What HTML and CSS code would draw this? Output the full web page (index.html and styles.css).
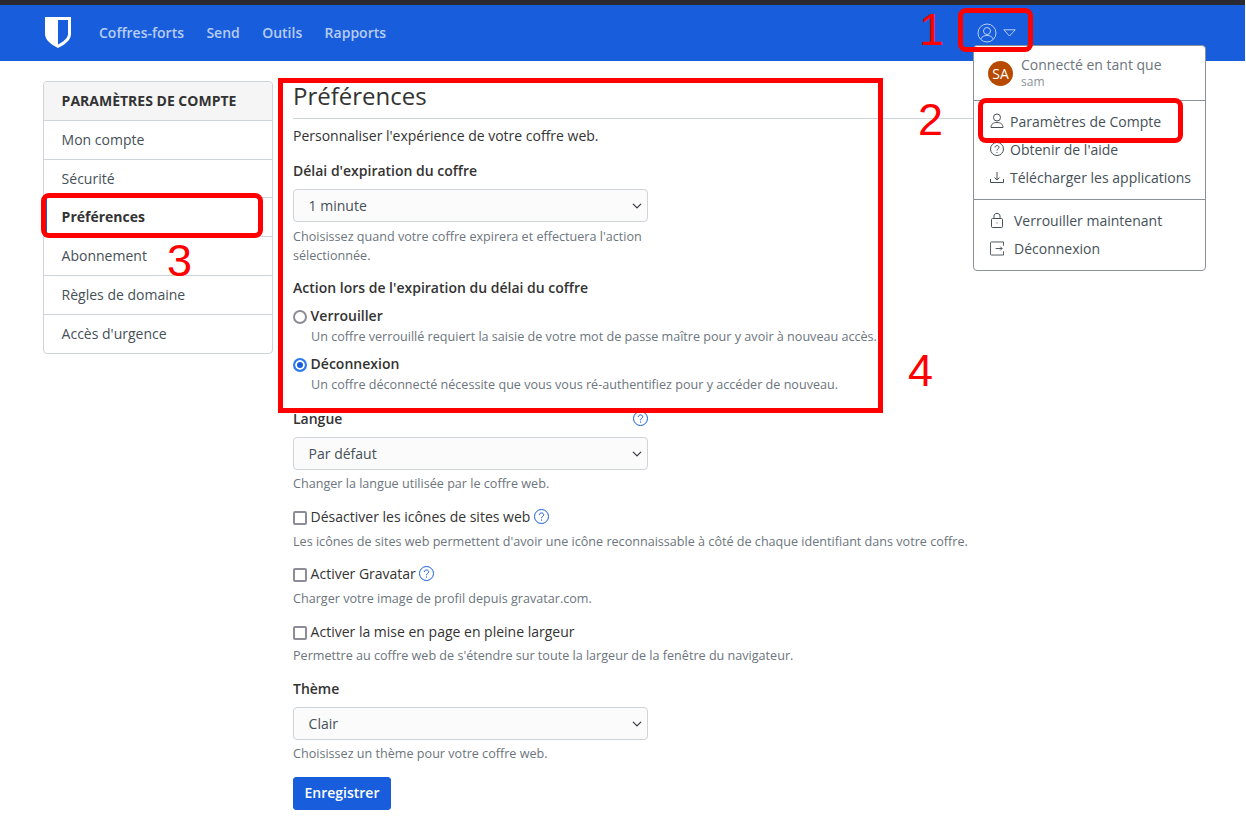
FILE: index.html
```html
<!DOCTYPE html>
<html lang="fr">
<head>
    <meta charset="UTF-8">
    <title>Préférences</title>
    <link rel="stylesheet" href="styles.css">
</head>
<body>
    <div class="top-strip"></div>
    <nav class="navbar">
        <svg class="logo" width="26" height="31" viewBox="0 0 26 31">
            <path fill="#fff" d="M0 0H26V17C26 23.500 19 28 13 31C7 28 0 23.500 0 17Z"/>
            <path fill="#175ddc" d="M13 3H23V17C23 21 18 25 13 27.500Z"/>
        </svg>
        <a class="nav-link nav-first" href="#">Coffres-forts</a>
        <a class="nav-link" href="#">Send</a>
        <a class="nav-link" href="#">Outils</a>
        <a class="nav-link" href="#">Rapports</a>
    </nav>

    <div class="user-toggle">
        <svg width="20" height="20" viewBox="0 0 20 20" fill="none" stroke="#b9cff5" stroke-width="1">
            <circle cx="10" cy="10" r="9"/>
            <circle cx="10" cy="8" r="3.500"/>
            <path d="M3.800 16C5 13.500 7 12.500 10 12.500S15 13.500 16.200 16"/>
        </svg>
        <svg width="13" height="8" viewBox="0 0 13 8" fill="none" stroke="#b9cff5" stroke-width="1">
            <path d="M.8.800H12.200L6.500 7Z"/>
        </svg>
    </div>

    <div class="user-menu">
        <div class="menu-head">
            <span class="avatar">SA</span>
            <div>
                <div class="menu-who">Connecté en tant que</div>
                <div class="menu-name">sam</div>
            </div>
        </div>
        <div class="menu-group">
            <a class="menu-item" href="#">
                <svg width="14" height="16" viewBox="0 0 14 16" fill="none" stroke="#465057">
                    <circle cx="7" cy="4.500" r="3.500"/>
                    <path d="M1 14.500C1 11 3.500 9.500 7 9.500S13 11 13 14.500Z"/>
                </svg>
                Paramètres de Compte
            </a>
            <a class="menu-item" href="#">
                <svg width="14" height="14" viewBox="0 0 14 14" fill="none" stroke="#465057">
                    <circle cx="7" cy="7" r="6.500"/>
                    <path d="M5 5.500C5 3 9 3 9 5.300C9 6.800 7 6.800 7 8.500"/>
                    <path d="M7 10V11"/>
                </svg>
                Obtenir de l'aide
            </a>
            <a class="menu-item" href="#">
                <svg width="14" height="14" viewBox="0 0 14 14" fill="none" stroke="#465057">
                    <path d="M.5 9V12.500H13.500V9"/>
                    <path d="M7 2V10M4.500 7.500L7 10L9.500 7.500"/>
                </svg>
                Télécharger les applications
            </a>
        </div>
        <div class="menu-group menu-last">
            <a class="menu-item" href="#">
                <svg width="14" height="16" viewBox="0 0 14 16" fill="none" stroke="#465057">
                    <rect x="1.500" y="6.500" width="11" height="9" rx="1"/>
                    <path d="M4 6.500V4C4 .5 10 .5 10 4V6.500M7 10.500V11.500"/>
                </svg>
                Verrouiller maintenant
            </a>
            <a class="menu-item" href="#">
                <svg width="14" height="15" viewBox="0 0 15 15" fill="none" stroke="#465057">
                    <path d="M14.500 4.500V.5H1.500A1 1 0 0 0 .5 1.500V13.500A1 1 0 0 0 1.500 14.500H14.500V10.500"/>
                    <path d="M6 7.500H13M11 5.500L13 7.500L11 9.500"/>
                </svg>
                Déconnexion
            </a>
        </div>
    </div>

    <div class="page">
        <aside class="side-card">
            <div class="side-head">Paramètres de compte</div>
            <a class="side-item" href="#">Mon compte</a>
            <a class="side-item side-short" href="#">Sécurité</a>
            <a class="side-item active" href="#">Préférences</a>
            <a class="side-item" href="#">Abonnement</a>
            <a class="side-item" href="#">Règles de domaine</a>
            <a class="side-item" href="#">Accès d'urgence</a>
        </aside>

        <main class="content">
            <h1 class="page-title">Préférences</h1>
            <p class="intro">Personnaliser l'expérience de votre coffre web.</p>

            <div class="field field-timeout">
                <label class="field-label" for="timeout">Délai d'expiration du coffre</label>
                <select class="select" id="timeout"><option>1 minute</option></select>
                <small class="help help-narrow">Choisissez quand votre coffre expirera et effectuera l'action sélectionnée.</small>
            </div>

            <div class="field field-action">
                <div class="field-label">Action lors de l'expiration du délai du coffre</div>
                <label class="radio-row">
                    <input type="radio" name="action">
                    <span class="radio-text">Verrouiller</span>
                </label>
                <small class="help help-indent">Un coffre verrouillé requiert la saisie de votre mot de passe maître pour y avoir à nouveau accès.</small>
                <label class="radio-row radio-second">
                    <input type="radio" name="action" checked>
                    <span class="radio-text">Déconnexion</span>
                </label>
                <small class="help help-indent">Un coffre déconnecté nécessite que vous vous ré-authentifiez pour y accéder de nouveau.</small>
            </div>

            <div class="field field-lang">
                <div class="label-row">
                    <label class="field-label" for="lang">Langue</label>
                    <svg class="info" width="15" height="15" viewBox="0 0 15 15" fill="none" stroke="#175ddc">
                        <circle cx="7.500" cy="7.500" r="7"/>
                        <path d="M5.300 6C5.300 3.300 9.700 3.300 9.700 5.800C9.700 7.400 7.500 7.400 7.500 9.300M7.500 10.500V11.700"/>
                    </svg>
                </div>
                <select class="select" id="lang"><option>Par défaut</option></select>
                <small class="help">Changer la langue utilisée par le coffre web.</small>
            </div>

            <div class="check-block">
                <label class="check-row">
                    <input type="checkbox">
                    <span>Désactiver les icônes de sites web</span>
                    <svg class="info" width="15" height="15" viewBox="0 0 15 15" fill="none" stroke="#175ddc">
                        <circle cx="7.500" cy="7.500" r="7"/>
                        <path d="M5.300 6C5.300 3.300 9.700 3.300 9.700 5.800C9.700 7.400 7.500 7.400 7.500 9.300M7.500 10.500V11.700"/>
                    </svg>
                </label>
                <small class="help">Les icônes de sites web permettent d'avoir une icône reconnaissable à côté de chaque identifiant dans votre coffre.</small>
            </div>

            <div class="check-block check-second">
                <label class="check-row">
                    <input type="checkbox">
                    <span>Activer Gravatar</span>
                    <svg class="info" width="15" height="15" viewBox="0 0 15 15" fill="none" stroke="#175ddc">
                        <circle cx="7.500" cy="7.500" r="7"/>
                        <path d="M5.300 6C5.300 3.300 9.700 3.300 9.700 5.800C9.700 7.400 7.500 7.400 7.500 9.300M7.500 10.500V11.700"/>
                    </svg>
                </label>
                <small class="help">Charger votre image de profil depuis gravatar.com.</small>
            </div>

            <div class="check-block check-third">
                <label class="check-row">
                    <input type="checkbox">
                    <span>Activer la mise en page en pleine largeur</span>
                </label>
                <small class="help">Permettre au coffre web de s'étendre sur toute la largeur de la fenêtre du navigateur.</small>
            </div>

            <div class="field field-theme">
                <label class="field-label" for="theme">Thème</label>
                <select class="select" id="theme"><option>Clair</option></select>
                <small class="help">Choisissez un thème pour votre coffre web.</small>
            </div>

            <button class="save-btn">Enregistrer</button>
        </main>
    </div>

    <!-- annotations drawn over the screenshot -->
    <div class="mark mark-1"></div>
    <div class="mark mark-2"></div>
    <div class="mark mark-3"></div>
    <div class="mark mark-4"></div>
    <span class="num num-1">1</span>
    <span class="num num-2">2</span>
    <span class="num num-3">3</span>
    <span class="num num-4">4</span>
</body>
</html>
```

FILE: styles.css
```css
html, body {
    margin: 0;
    background: #fff;
}
body {
    position: relative;
    height: 824px;
    overflow: hidden;
    font: 14px/21px "Open Sans", sans-serif;
    color: #333;
}
a {
    text-decoration: none;
    color: inherit;
}

.top-strip {
    height: 5px;
    margin-right: 1px;
    background: #2b2a33;
}
.navbar {
    display: flex;
    align-items: center;
    height: 56px;
    margin-right: 1px;
    padding-left: 45px;
    background: #175ddc;
}
.logo {
    margin-top: -1px;
}
.nav-link {
    margin: -2px 0 0 22.400px;
    font-weight: 600;
    color: rgba(255, 255, 255, .7);
}
.nav-first {
    margin-left: 28px;
}

.user-toggle {
    position: absolute;
    top: 23px;
    left: 977px;
    display: flex;
    align-items: center;
    gap: 6px;
}
.user-menu {
    position: absolute;
    top: 45px;
    left: 973px;
    z-index: 2;
    box-sizing: border-box;
    width: 233px;
    height: 226px;
    background: #fff;
    border: 1px solid #8b9199;
    border-radius: 4px;
    color: #465057;
}
.menu-head {
    display: flex;
    align-items: center;
    gap: 8px;
    height: 52px;
    padding: 0 0 2px 14px;
    border-bottom: 1px solid #8b9199;
}
.avatar {
    display: flex;
    align-items: center;
    justify-content: center;
    width: 25px;
    height: 25px;
    margin-top: 2px;
    border-radius: 50%;
    background: #b84a00;
    color: #fff;
    font-size: 14px;
}
.menu-who {
    color: #6d757e;
    line-height: 19px;
}
.menu-name {
    color: #8b9199;
    font-size: 12px;
    line-height: 16px;
}
.menu-group {
    padding: 6px 0 8px;
    border-bottom: 1px solid #8b9199;
}
.menu-last {
    border-bottom: 0;
}
.menu-item {
    display: flex;
    align-items: center;
    gap: 6px;
    height: 28px;
    padding-left: 16px;
}
.menu-last .menu-item {
    gap: 10px;
}

.page {
    display: flex;
    align-items: flex-start;
    gap: 20px;
    padding: 20px 0 0 43px;
}
.side-card {
    flex: none;
    width: 230px;
    box-sizing: border-box;
    border: 1px solid #ced4da;
    border-radius: 4px;
    overflow: hidden;
}
.side-head {
    box-sizing: border-box;
    height: 39px;
    padding: 8px 17.600px;
    background: #f5f5f5;
    border-bottom: 1px solid #ced4da;
    font-weight: 700;
    text-transform: uppercase;
}
.side-item {
    display: block;
    box-sizing: border-box;
    height: 39px;
    padding: 8px 17.600px;
    border-bottom: 1px solid #ced4da;
    color: #465057;
}
.side-short {
    height: 38px;
}
.side-item:last-child {
    border-bottom: 0;
    height: 38px;
}
.side-item.active {
    padding-left: 14.600px;
    border-left: 3px solid #175ddc;
    font-weight: 700;
    color: #333;
}

.content {
    width: 910px;
}
.page-title {
    margin: 0;
    padding-bottom: 8px;
    border-bottom: 1px solid #ced4da;
    font-size: 24px;
    font-weight: 400;
    line-height: 29px;
    color: #333;
}
.intro {
    margin: 6px 0 0;
}
.field {
    width: 355px;
}
.field-label {
    display: block;
    margin-bottom: 8px;
    font-weight: 600;
}
.field-timeout {
    margin-top: 14px;
}
.field-action {
    width: 600px;
    margin-top: 12px;
}
.field-action .field-label {
    margin-bottom: 7px;
}
.field-lang {
    margin-top: 14px;
}
.field-theme {
    margin-top: 13px;
}
.label-row {
    display: flex;
    align-items: flex-start;
    justify-content: space-between;
    height: 29px;
}
.label-row .info {
    margin-top: 3px;
}
.select {
    display: block;
    box-sizing: border-box;
    width: 355px;
    height: 33px;
    padding: 0 28px 0 14.600px;
    appearance: none;
    background: #fbfbfb url("data:image/svg+xml,%3Csvg xmlns='http://www.w3.org/2000/svg' viewBox='0 0 16 16'%3E%3Cpath fill='none' stroke='%23343a40' stroke-width='2' stroke-linecap='round' stroke-linejoin='round' d='M2 5l6 6 6-6'/%3E%3C/svg%3E") no-repeat right 5px center / 10px 10px;
    border: 1px solid #ced4da;
    border-radius: 4px;
    font: 14px "Open Sans", sans-serif;
    color: #465057;
}
.help {
    display: block;
    margin-top: 4px;
    font-size: 12.600px;
    line-height: 19px;
    color: #6c757d;
}
.help-narrow {
    width: 355px;
    margin-top: 5px;
}
.help-indent {
    margin: 1px 0 0 18px;
    white-space: nowrap;
}

.radio-row, .check-row {
    display: flex;
    align-items: center;
    gap: 3.600px;
    height: 21px;
}
.radio-second {
    margin-top: 7px;
}
.radio-text {
    font-weight: 600;
}
input[type="radio"], input[type="checkbox"] {
    appearance: none;
    box-sizing: border-box;
    flex: none;
    width: 14px;
    height: 14px;
    margin: 3px 0 0;
    background: #fff;
    border: 2px solid #8d8d99;
}
input[type="radio"] {
    border-radius: 50%;
}
input[type="radio"]:checked {
    border-color: #2f7bf0;
    box-shadow: inset 0 0 0 2px #fff;
    background: #175ddc;
}
input[type="checkbox"] {
    border-radius: 2px;
}
.check-block {
    margin-top: 13px;
}
.check-block .help {
    margin-top: 5px;
}
.check-second {
    margin-top: 12px;
}
.check-third .help {
    margin-top: 4px;
}
.save-btn {
    display: block;
    width: 98px;
    height: 33px;
    margin-top: 14px;
    padding: 0 0 2px;
    background: #175ddc;
    border: 1px solid #175ddc;
    border-radius: 3px;
    font: 600 14px "Open Sans", sans-serif;
    color: #fff;
}

/* red annotation boxes */
.mark {
    position: absolute;
    z-index: 3;
    box-sizing: border-box;
    border: 5px solid #f00;
    border-radius: 8px;
}
.mark-1 { left: 958px; top: 8px; width: 75px; height: 44px; }
.mark-2 { left: 978px; top: 98px; width: 205px; height: 45px; }
.mark-3 { left: 41px; top: 193px; width: 222px; height: 45px; }
.mark-4 { left: 278px; top: 78px; width: 605px; height: 335px; border-radius: 0; }
.num {
    position: absolute;
    z-index: 3;
    font: 45px/46px "Liberation Sans", sans-serif;
    color: #f00;
}
.num-1 { left: 919px; top: 7px; }
.num-2 { left: 918px; top: 97px; }
.num-3 { left: 167px; top: 238px; }
.num-4 { left: 908px; top: 348px; }
```
